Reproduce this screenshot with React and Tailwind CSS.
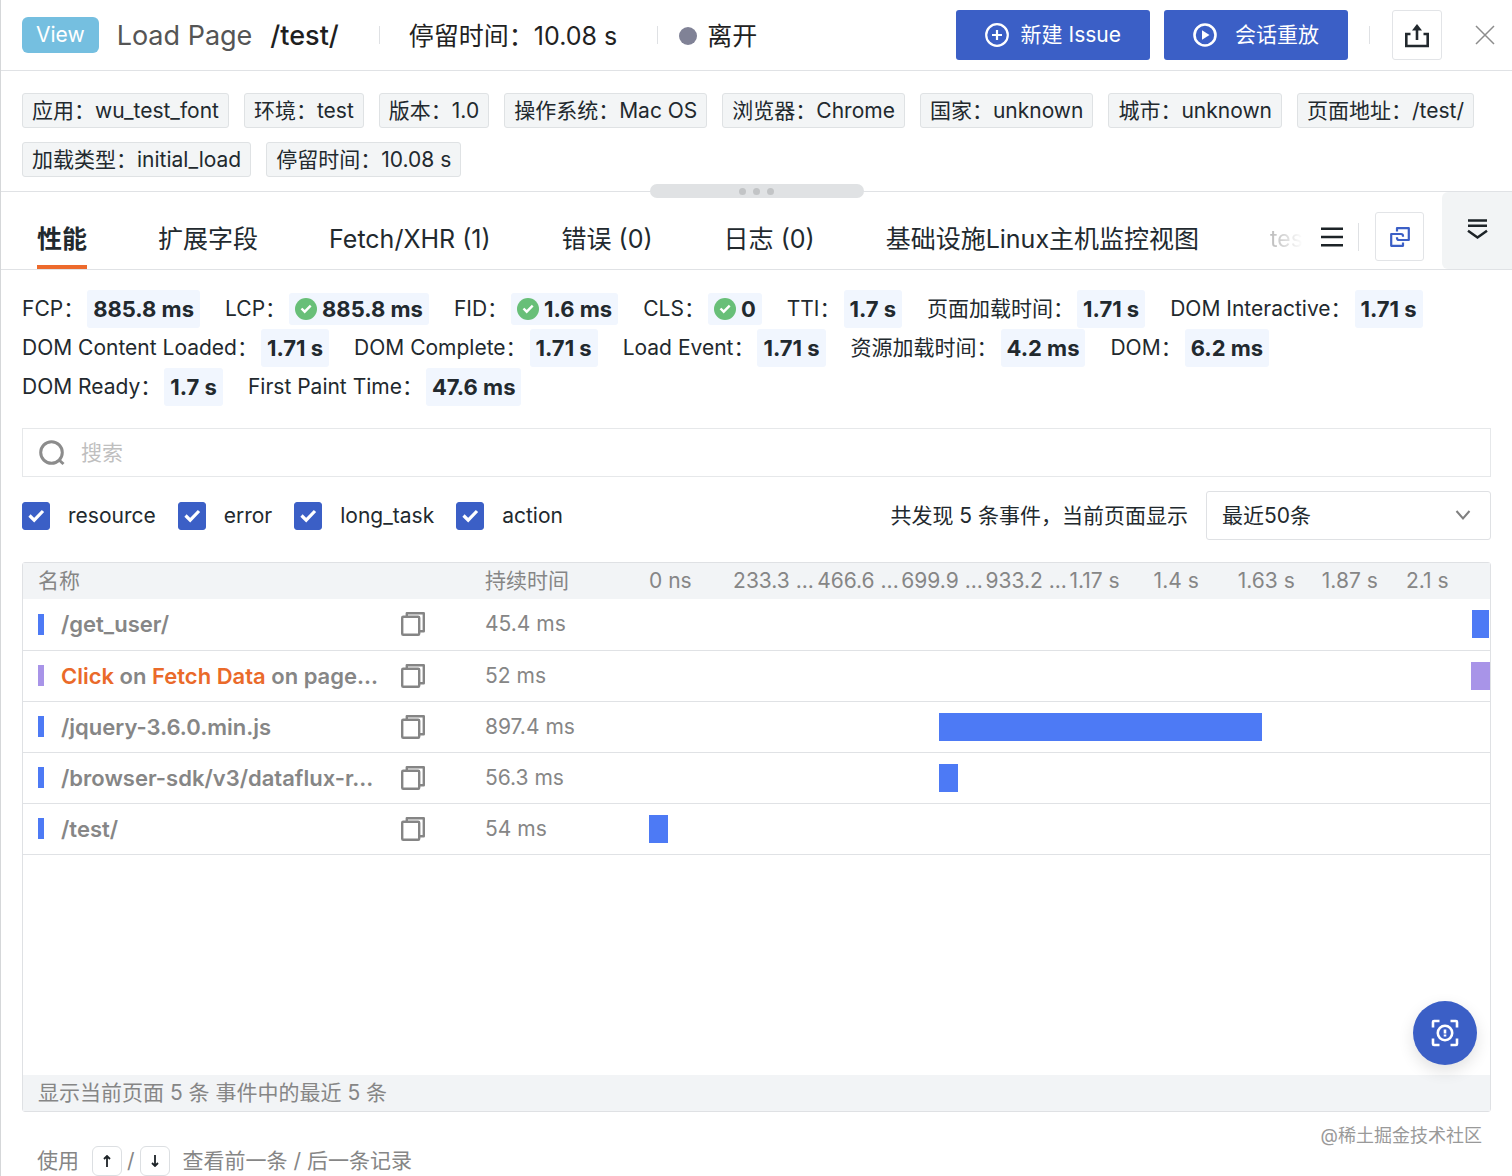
import { useState } from 'react';

const tags = [
  ['应用', 'wu_test_font'],
  ['环境', 'test'],
  ['版本', '1.0'],
  ['操作系统', 'Mac OS'],
  ['浏览器', 'Chrome'],
  ['国家', 'unknown'],
  ['城市', 'unknown'],
  ['页面地址', '/test/'],
  ['加载类型', 'initial_load'],
  ['停留时间', '10.08 s'],
];

const tabs = ['性能', '扩展字段', 'Fetch/XHR (1)', '错误 (0)', '日志 (0)', '基础设施Linux主机监控视图'];

const metrics = [
  { label: 'FCP', value: '885.8 ms' },
  { label: 'LCP', value: '885.8 ms', good: true },
  { label: 'FID', value: '1.6 ms', good: true },
  { label: 'CLS', value: '0', good: true },
  { label: 'TTI', value: '1.7 s' },
  { label: '页面加载时间', value: '1.71 s' },
  { label: 'DOM Interactive', value: '1.71 s' },
  { label: 'DOM Content Loaded', value: '1.71 s' },
  { label: 'DOM Complete', value: '1.71 s' },
  { label: 'Load Event', value: '1.71 s' },
  { label: '资源加载时间', value: '4.2 ms' },
  { label: 'DOM', value: '6.2 ms' },
  { label: 'DOM Ready', value: '1.7 s' },
  { label: 'First Paint Time', value: '47.6 ms' },
];

const eventTypes = ['resource', 'error', 'long_task', 'action'];

const ticks = ['0 ns', '233.3 ...', '466.6 ...', '699.9 ...', '933.2 ...', '1.17 s', '1.4 s', '1.63 s', '1.87 s', '2.1 s'];

// start and width are percentages of the timeline column
const events = [
  { name: '/get_user/', duration: '45.4 ms', start: 97.9, width: 2, color: 'bg-[#4d7af5]' },
  {
    name: (
      <>
        <span className="text-[#ea6a2a]">Click</span> on <span className="text-[#ea6a2a]">Fetch Data</span> on page...
      </>
    ),
    duration: '52 ms',
    start: 97.8,
    width: 2.2,
    color: 'bg-[#a894e8]',
  },
  { name: '/jquery-3.6.0.min.js', duration: '897.4 ms', start: 34.5, width: 38.4, color: 'bg-[#4d7af5]' },
  { name: '/browser-sdk/v3/dataflux-r...', duration: '56.3 ms', start: 34.5, width: 2.3, color: 'bg-[#4d7af5]' },
  { name: '/test/', duration: '54 ms', start: 0, width: 2.3, color: 'bg-[#4d7af5]' },
];

const Divider = ({ className }) => <span className={`w-px shrink-0 bg-[#dfe1e4] ${className}`} />;

const CheckCircle = () => (
  <svg className="size-[22px] shrink-0" viewBox="0 0 22 22" fill="none">
    <circle cx="11" cy="11" r="11" fill="#68bf78" />
    <path d="M6.5 10.5l3.2 3.2 6-6" stroke="#fff" strokeWidth="2.4" />
  </svg>
);

const CopyIcon = () => (
  <svg className="size-6" viewBox="0 0 24 24" fill="none" stroke="#858585" strokeWidth="2.400" strokeLinejoin="round">
    <rect x="1.2" y="4.8" width="17" height="18" rx="1" />
    <path d="M5.8 4.500V1.200h17v18H18.500" />
  </svg>
);

const Header = () => (
  <header className="flex h-[71px] items-center border-b border-[#e0e2e5] pl-[21px] pr-4 text-[25px] text-[#222]">
    <span className="flex h-9 items-center rounded-md bg-[#75bfe0] px-[14px] text-[21px] text-white">View</span>
    <h1 className="ml-[18px] mt-0.5 flex gap-[18px] text-[27px] text-[#555]">
      Load Page <span className="font-medium text-[#1f1f1f]">/test/</span>
    </h1>
    <Divider className="ml-10 h-[18px]" />
    <span className="ml-[29px] mt-0.5">停留时间：10.08 s</span>
    <Divider className="ml-10 h-[18px]" />
    <span className="ml-[21px] mt-0.5 flex items-center gap-[10px]">
      <span className="size-[18px] rounded-full bg-[#808296]" />
      离开
    </span>
    <div className="ml-auto flex items-center text-[21px] text-white">
      <button className="flex h-[50px] items-center gap-3 rounded-[3px] bg-[#3b5fc6] px-[29px]">
        <svg className="size-6" viewBox="0 0 24 24" fill="none" stroke="currentColor" strokeWidth="2.200">
          <circle cx="12" cy="12" r="10.800" />
          <path d="M12 7v10M7 12h10" />
        </svg>
        新建 Issue
      </button>
      <button className="ml-[14px] flex h-[50px] items-center gap-[18px] rounded-[3px] bg-[#3b5fc6] px-[29px]">
        <svg className="size-6" viewBox="0 0 24 24" fill="none" stroke="currentColor" strokeWidth="2.600">
          <circle cx="12" cy="12" r="10.500" />
          <path d="M9 7.200v9.600l7.500-4.800z" fill="currentColor" stroke="none" />
        </svg>
        会话重放
      </button>
      <Divider className="ml-[21px] h-[18px]" />
      <button aria-label="导出" className="ml-[22px] flex size-[50px] items-center justify-center rounded-[3px] border border-[#e2e4e7]">
        <svg className="size-[26px]" viewBox="0 0 26 26" fill="none" stroke="#22292e" strokeWidth="2.600">
          <path d="M6.500 12H2.300v12h21.400V12h-4.200M13 18V6" />
          <path d="M8 8.500l5-6.500 5 6.500z" fill="#22292e" stroke="none" />
        </svg>
      </button>
      <button aria-label="关闭" className="ml-8">
        <svg className="size-[22px]" viewBox="0 0 22 22" fill="none" stroke="#8c8c8c" strokeWidth="1.500">
          <path d="M2 2l18 18M20 2L2 20" />
        </svg>
      </button>
    </div>
  </header>
);

const TabBar = () => {
  const [active, setActive] = useState('性能');

  return (
    <nav className="relative flex h-[79px] border-y border-[#e0e2e5] text-[25px] text-[#22292e]">
      <div className="absolute -top-2 left-1/2 flex h-[14px] w-[214px] -translate-x-1/2 items-center justify-center gap-[7px] rounded-[7px] bg-[#e0e2e4]">
        <span className="size-[7px] rounded-full bg-[#c2c4c6]" />
        <span className="size-[7px] rounded-full bg-[#c2c4c6]" />
        <span className="size-[7px] rounded-full bg-[#c2c4c6]" />
      </div>
      <div className="flex flex-1 gap-[71px] overflow-hidden whitespace-nowrap pl-9">
        {tabs.map((tab) => (
          <button
            key={tab}
            onClick={() => setActive(tab)}
            className={tab === active ? 'border-b-4 border-[#ed6a2c] pt-5 font-bold' : 'border-b-4 border-transparent pt-5'}
          >
            {tab}
          </button>
        ))}
        <button className="bg-linear-to-r from-[#bbb] to-white bg-clip-text pt-4 text-[23px] text-transparent">tes</button>
      </div>
      <div className="flex items-center pt-3">
        <button aria-label="全部标签">
          <svg className="size-[22px]" viewBox="0 0 22 22" stroke="#1d2327" strokeWidth="2.600">
            <path d="M0 2.800h22M0 11h22M0 19.200h22" />
          </svg>
        </button>
        <Divider className="ml-[15px] h-7" />
        <button aria-label="新窗口打开" className="ml-4 flex size-[49px] items-center justify-center rounded-[3px] border border-[#e2e4e7]">
          <svg className="size-5" viewBox="0 0 20 20" fill="none" stroke="#3b5fc6" strokeWidth="2.200" strokeLinejoin="round">
            <path d="M7 4.500V1.200h11.800V13H9a2 2 0 0 1-2-2v-.800" />
            <path d="M13 15.500v3.300H1.200V7H11a2 2 0 0 1 2 2v.800" />
          </svg>
        </button>
      </div>
      <button aria-label="收起" className="ml-[18px] flex w-[70px] items-start justify-center rounded-l-md bg-[#f2f4f5] pt-[26px]">
        <svg className="size-[22px]" viewBox="0 0 22 22" fill="none" stroke="#1d2327" strokeWidth="2.500">
          <path d="M2 2.500h19M2 7.700h19M2 12.800l9.500 6.700 9.500-6.700" />
        </svg>
      </button>
    </nav>
  );
};

const Filters = () => {
  const [checked, setChecked] = useState(eventTypes);

  const toggle = (type) =>
    setChecked(checked.includes(type) ? checked.filter((t) => t !== type) : [...checked, type]);

  return (
    <div className="mt-[14px] flex items-center gap-[22px]">
      {eventTypes.map((type) => (
        <label key={type} className="flex items-center gap-[18px]">
          <span className="relative flex">
            <input
              type="checkbox"
              checked={checked.includes(type)}
              onChange={() => toggle(type)}
              className="size-7 appearance-none rounded-[3px] border border-[#3b5fc6] checked:bg-[#3b5fc6]"
            />
            <svg className="pointer-events-none absolute inset-0 size-7" viewBox="0 0 28 28" fill="none" stroke="#fff" strokeWidth="3.200">
              <path d="M7.500 13.500l4.700 4.700L21 9" />
            </svg>
          </span>
          {type}
        </label>
      ))}
      <label htmlFor="limit" className="ml-auto">
        共发现 5 条事件，当前页面显示
      </label>
      <div className="relative -ml-1 w-[285px]">
        <select id="limit" className="h-[49px] w-full appearance-none rounded-[3px] border border-[#dfe1e4] bg-white pl-[15px]">
          <option>最近50条</option>
        </select>
        <svg className="pointer-events-none absolute right-5 top-[18px] h-3 w-4" viewBox="0 0 16 12" fill="none" stroke="#808080" strokeWidth="2">
          <path d="M1.500 2L8 9.500 14.500 2" />
        </svg>
      </div>
    </div>
  );
};

const EventTable = () => (
  <section className="relative mt-[22px] flex flex-1 flex-col rounded-[3px] border border-[#dfe1e4] text-[#868686]">
    <table className="w-full table-fixed text-left">
      <thead>
        <tr className="h-9 bg-[#f2f4f6]">
          <th className="w-[462px] pl-[15px] font-normal">名称</th>
          <th className="w-[164px] font-normal">持续时间</th>
          <th className="font-normal">
            <div className="grid grid-cols-10 whitespace-nowrap">
              {ticks.map((tick) => (
                <span key={tick}>{tick}</span>
              ))}
            </div>
          </th>
        </tr>
      </thead>
      <tbody>
        {events.map((event) => (
          <tr key={event.duration} className="h-[51px] border-b border-[#e0e2e5]">
            <td className="pl-[15px] pr-[60px]">
              <div className="flex items-center">
                <span className={`h-[21px] w-[6px] shrink-0 ${event.color}`} />
                <span className="ml-[17px] flex-1 whitespace-nowrap text-[22px] font-semibold">{event.name}</span>
                <button aria-label="复制">
                  <CopyIcon />
                </button>
              </div>
            </td>
            <td>{event.duration}</td>
            <td>
              <div className={`h-7 ${event.color}`} style={{ marginLeft: `${event.start}%`, width: `${event.width}%` }} />
            </td>
          </tr>
        ))}
      </tbody>
    </table>
    <p className="mt-auto flex h-9 items-center bg-[#f2f4f6] pl-[15px]">显示当前页面 5 条 事件中的最近 5 条</p>
    <button
      aria-label="截图反馈"
      className="absolute bottom-[46px] right-[13px] flex size-16 items-center justify-center rounded-full bg-[#3b5fc6] shadow-[0_6px_16px_rgba(0,0,0,0.12)]"
    >
      <svg className="size-7" viewBox="0 0 28 28" fill="none" stroke="#fff" strokeWidth="2.600">
        <path d="M2 8.500V3a1 1 0 0 1 1-1h5.500M19.500 2H25a1 1 0 0 1 1 1v5.500M26 19.500V25a1 1 0 0 1-1 1h-5.500M8.500 26H3a1 1 0 0 1-1-1v-5.500" />
        <circle cx="14" cy="14" r="7.200" strokeWidth="2.600" />
        <path d="M14 10.500v4M14 15.500v2" strokeWidth="2.600" />
      </svg>
    </button>
  </section>
);

const App = () => (
  <div className="flex min-h-screen flex-col border-l border-[#d5d7d9] bg-white font-['Inter','Noto_Sans_CJK_SC',sans-serif] text-[21px] leading-[30px] text-[#22292e]">
    <Header />
    <div className="flex flex-wrap gap-x-[15px] gap-y-[14px] px-[21px] pb-[14px] pt-[22px]">
      {tags.map(([label, value]) => (
        <span key={label} className="flex h-[35px] items-center rounded-[3px] border border-[#dfe2e4] bg-[#f3f5f6] px-[9px]">
          {label}：{value}
        </span>
      ))}
    </div>
    <TabBar />
    <main className="flex flex-1 flex-col px-[21px]">
      <div className="mt-[19px] flex flex-wrap gap-x-[25px]">
        {metrics.map(({ label, value, good }) => (
          <div key={label} className="flex h-[39px] items-center gap-[3px]">
            <span>{label}：</span>
            <strong
              className={
                good
                  ? 'flex h-8 items-center gap-[5px] rounded-[3px] bg-[#f1f6fe] px-[6px] text-[22px] font-bold'
                  : 'flex h-[38px] items-center rounded-[3px] bg-[#f1f6fe] px-[6px] text-[22px] font-bold'
              }
            >
              {good && <CheckCircle />}
              {value}
            </strong>
          </div>
        ))}
      </div>
      <label className="mt-[22px] flex h-[49px] items-center gap-4 border border-[#e6e8ea] pl-4">
        <svg className="size-[26px]" viewBox="0 0 26 26" fill="none" stroke="#8c8c8c" strokeWidth="3">
          <circle cx="12.500" cy="12.500" r="10.800" />
          <path d="M19.500 19.500l5 4.500" />
        </svg>
        <input type="text" aria-label="搜索" placeholder="搜索" className="flex-1 outline-none placeholder:text-[#bfbfbf]" />
      </label>
      <Filters />
      <EventTable />
    </main>
    <footer className="flex h-16 items-start justify-between pl-9 pr-[30px] text-[#868686]">
      <div className="mt-[34px] flex items-center">
        使用
        <kbd className="ml-[13px] flex size-[30px] items-center justify-center rounded-md border border-[#dcdfe2] text-[#1d2327]">
          <svg className="h-3 w-2" viewBox="0 0 8 12" fill="none" stroke="currentColor" strokeWidth="1.800">
            <path d="M4 12V1M1 4l3-3 3 3" />
          </svg>
        </kbd>
        <span className="mx-[5px]">/</span>
        <kbd className="mr-[13px] flex size-[30px] items-center justify-center rounded-md border border-[#dcdfe2] text-[#1d2327]">
          <svg className="h-3 w-2" viewBox="0 0 8 12" fill="none" stroke="currentColor" strokeWidth="1.800">
            <path d="M4 0v11M1 8l3 3 3-3" />
          </svg>
        </kbd>
        查看前一条 / 后一条记录
      </div>
      <span className="mt-[9px] text-[18px] text-[#999]">@稀土掘金技术社区</span>
    </footer>
  </div>
);

export default App;
